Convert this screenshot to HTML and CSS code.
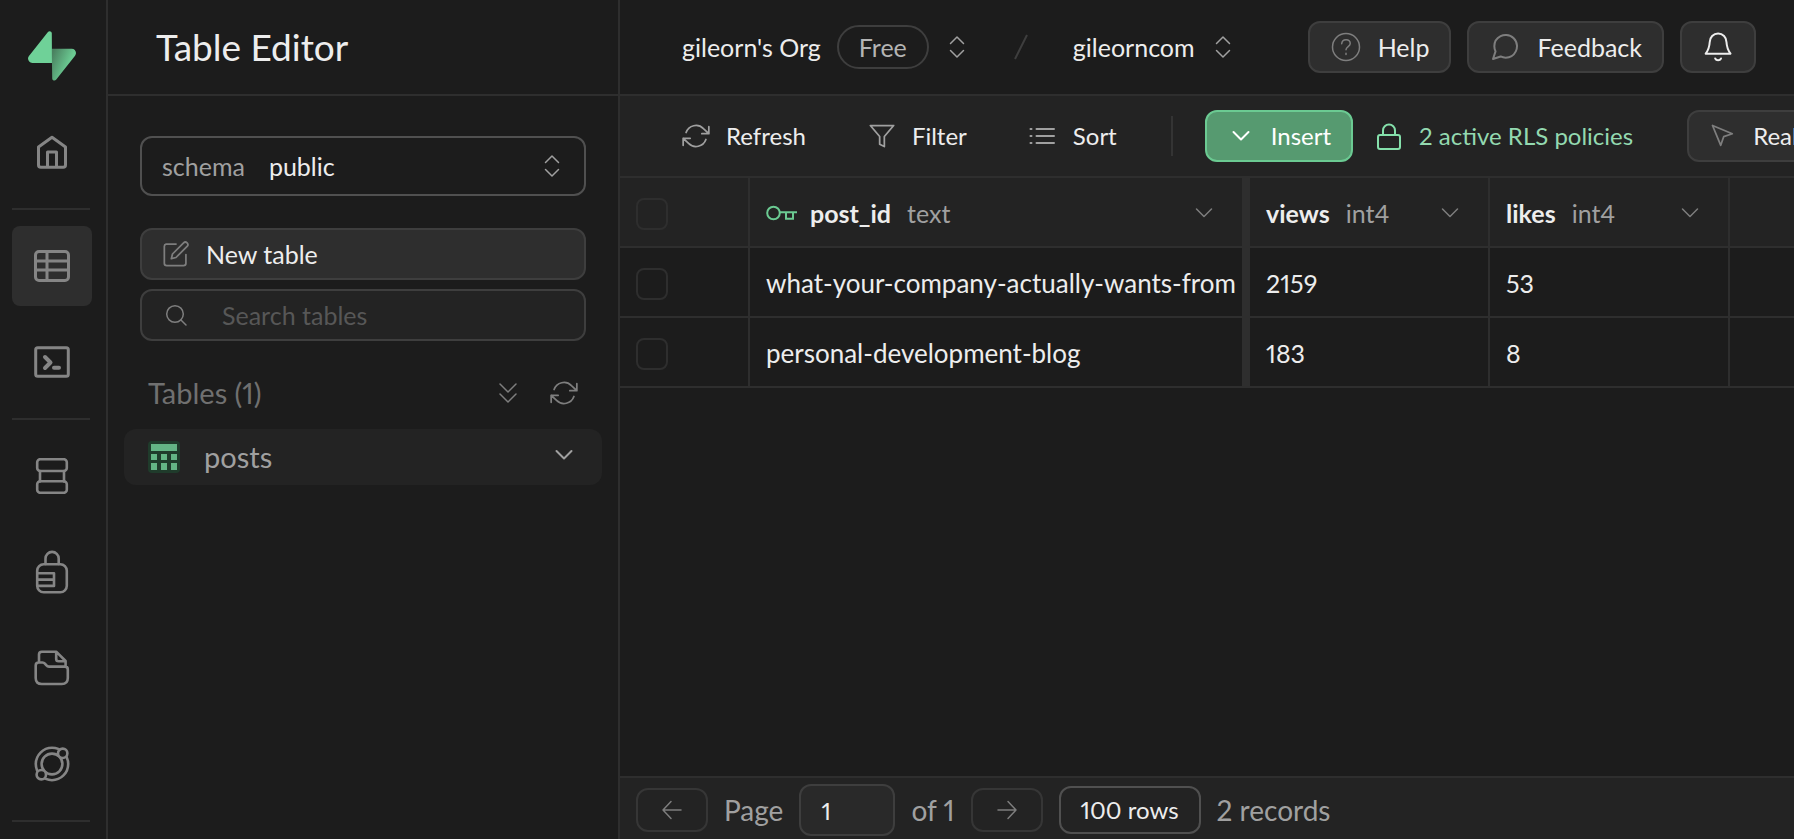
FILE: index.html
```html
<!DOCTYPE html>
<html lang="en">
<head>
<meta charset="utf-8">
<title>Table Editor</title>
<meta name="viewport" content="width=device-width, initial-scale=1">
<link rel="stylesheet" href="styles.css">
</head>
<body>
<svg class="sprite" aria-hidden="true">
  <symbol id="updown" viewBox="0 0 24 24"><path d="M5.500 8.500 12 2l6.500 6.500M5.500 15.500 12 22l6.500-6.500"/></symbol>
  <symbol id="refresh" viewBox="0 0 24 24"><path d="M23 4v6h-6M1 20v-6h6M3.510 9a9 9 0 0 1 14.850-3.360L23 10M1 14l4.640 4.360A9 9 0 0 0 20.490 15"/></symbol>
  <symbol id="chevron" viewBox="0 0 28 28"><path d="m6.500 10 7.500 7.500 7.500-7.500"/></symbol>
</svg>
<div class="app">
  <nav class="rail" aria-label="Main">
    <a class="rail-item" href="#" aria-label="Supabase">
      <svg width="48" height="50" viewBox="0 0 109 113">
        <defs><linearGradient id="shade" x1="54" y1="55" x2="94" y2="72" gradientUnits="userSpaceOnUse"><stop offset="0" stop-color="#4a8160"/><stop offset="1" stop-color="#6bca92"/></linearGradient></defs>
        <path fill="url(#shade)" d="M63.708 110.284C60.848 113.885 55.050 111.912 54.981 107.314L53.974 40.063H99.194C107.384 40.063 111.952 49.523 106.859 55.937Z"/>
        <path fill="#6fd198" d="M45.317 2.071C48.177-1.530 53.975.443 54.043 5.041L54.485 72.292H9.831C1.640 72.292-2.928 62.832 2.166 56.418Z"/>
      </svg>
    </a>
    <a class="rail-item" href="#" aria-label="Home"><svg class="icon heavy" width="36" height="36" viewBox="0 0 36 36"><path d="M4.500 13 18 3.200 31.500 13v18q0 2.300-2.300 2.300H6.800q-2.300 0-2.300-2.300ZM13.500 33V18h9v15"/></svg></a>
    <hr class="rail-line">
    <a class="rail-item active" href="#" aria-label="Table Editor" aria-current="page"><svg class="icon heavy" width="36" height="36" viewBox="0 0 36 36"><rect x="1.500" y="3.500" width="33" height="29" rx="3.500"/><path d="M2 13h32M2 22h32M13 4v28"/></svg></a>
    <a class="rail-item" href="#" aria-label="SQL Editor"><svg class="icon heavy" width="36" height="36" viewBox="0 0 36 36"><path d="M1.700 5.700q0-2 2-2h28.600q2 0 2 2v24.600q0 2-2 2H3.700q-2 0-2-2Z"/><path stroke-width="4" d="m11 13 5.500 5.500L11 24M20 23.800h5"/></svg></a>
    <hr class="rail-line">
    <a class="rail-item" href="#" aria-label="Database"><svg class="icon mid" width="36" height="36" viewBox="0 0 36 36"><rect x="3.200" y="1.200" width="29.600" height="11.800" rx="3"/><path d="M6 13v10.400M30 13v10.400"/><rect x="3.200" y="23.200" width="29.600" height="11.600" rx="3"/></svg></a>
    <a class="rail-item" href="#" aria-label="Authentication"><svg class="icon mid" width="36" height="44" viewBox="0 0 36 44"><rect x="3.200" y="14.300" width="29.600" height="28" rx="6.500"/><path d="M11.500 14V8.500a6.600 6.600 0 0 1 13.200 0V14M3.500 23.300H20v12.600H3.500M3.500 29.600H20"/></svg></a>
    <a class="rail-item" href="#" aria-label="Storage"><svg class="icon mid" width="36" height="36" viewBox="0 0 36 36"><path d="M1.700 15.500q0-3 3-3h3.800q1.400 0 2.400 1.200l1.300 1.500q1.200 1.400 2.800 1.400h16q2.800 0 2.800 2.800v8.600q0 6-6 6H7.700q-6 0-6-6ZM5 12.500V4.500q0-2.800 2.800-2.800h14.400L31.600 11v5.600M22.200 1.700V9q0 2.300 2.300 2.300h7"/></svg></a>
    <a class="rail-item" href="#" aria-label="Realtime"><svg class="icon mid" width="36" height="36" viewBox="0 0 36 36"><circle cx="18" cy="18" r="16.200"/><circle cx="18" cy="18" r="10.400"/><g fill="#1c1c1c"><circle cx="28.700" cy="7.300" r="4.700"/><circle cx="7.300" cy="28.700" r="4.700"/></g></svg></a>
    <hr class="rail-line">
  </nav>

  <aside class="side">
    <header class="side-head"><h1>Table Editor</h1></header>
    <div class="side-tools">
      <div class="schema">
        <label for="schema">schema</label>
        <select id="schema"><option>public</option></select>
        <svg class="icon" width="24" height="24"><use href="#updown"/></svg>
      </div>
      <button class="btn new-table" type="button"><svg class="icon dim" width="28" height="28" viewBox="0 0 24 24"><path d="M12 3.500H3.500a2 2 0 0 0-1.500 2V20a2 2 0 0 0 2 2h14.500a2 2 0 0 0 2-2v-7.500M18.500 2.500a2.120 2.120 0 0 1 3 3L12 15l-4 1 1-4 9.500-9.500Z"/></svg>New table</button>
      <label class="search"><svg class="icon dim" width="24" height="24" viewBox="0 0 24 24"><circle cx="11" cy="11" r="8.300"/><path d="m17 17 5 5"/></svg><input type="text" placeholder="Search tables" aria-label="Search tables"></label>
    </div>
    <div class="list-head">
      <h2>Tables (1)</h2>
      <button class="plain" type="button" aria-label="Sort tables"><svg class="icon dim" width="28" height="28" viewBox="0 0 28 28"><path d="m6 5 8 8 8-8M6 15l8 8 8-8"/></svg></button>
      <button class="plain" type="button" aria-label="Refresh tables"><svg class="icon dim" width="28" height="28"><use href="#refresh"/></svg></button>
    </div>
    <a class="table-link" href="#">
      <svg width="32" height="32" viewBox="0 0 32 32"><rect width="32" height="32" rx="4" fill="#1f3b2b"/><path fill="#63b585" d="M3 3h26v7H3zM3 13h6v6H3zM13 13h6v6h-6zM23 13h6v6h-6zM3 22h6v7H3zM13 22h6v7h-6zM23 22h6v7h-6z"/></svg>
      <span>posts</span>
      <svg class="icon table-chevron" width="28" height="28"><use href="#chevron"/></svg>
    </a>
  </aside>

  <main class="main">
    <header class="top">
      <button class="plain crumb" type="button">gileorn's Org <span class="pill">Free</span><svg class="icon" width="24" height="24"><use href="#updown"/></svg></button>
      <svg class="slash" width="32" height="32" viewBox="0 0 32 32"><path d="M22 4 10 28"/></svg>
      <button class="plain crumb" type="button">gileorncom <svg class="icon" width="24" height="24"><use href="#updown"/></svg></button>
      <div class="top-actions">
        <button class="btn" type="button"><svg class="icon dim" width="32" height="32" viewBox="0 0 32 32"><circle cx="16" cy="16" r="13.500"/><path d="M11.700 12.800c.4-5.700 9-5.200 8.500 0-.2 2.700-4.200 3-4.200 6M16 22.300v1.200"/></svg>Help</button>
        <button class="btn" type="button"><svg class="icon dim" width="32" height="32" viewBox="0 0 24 24"><path d="M21 11.500a8.380 8.380 0 0 1-.9 3.800 8.500 8.500 0 0 1-7.600 4.700 8.380 8.380 0 0 1-3.800-.9L3 21l1.900-5.700a8.380 8.380 0 0 1-.9-3.800 8.500 8.500 0 0 1 4.700-7.600 8.380 8.380 0 0 1 3.800-.9h.5a8.480 8.480 0 0 1 8 8Z"/></svg>Feedback</button>
        <button class="btn" type="button" aria-label="Notifications"><svg class="icon bell" width="32" height="32" viewBox="0 0 32 32"><path d="M3.700 22.700C6.700 18.500 7.500 15 7.700 11.200a8.400 8.700 0 0 1 16.800 0c.2 3.800 1 7.300 4 11.500ZM13.200 27.500a3.200 3.200 0 0 0 5.800 0"/></svg></button>
      </div>
    </header>

    <div class="toolbar">
      <div class="query-tools">
        <button class="btn ghost" type="button"><svg class="icon" width="28" height="28"><use href="#refresh"/></svg>Refresh</button>
        <button class="btn ghost" type="button"><svg class="icon" width="28" height="28" viewBox="0 0 24 24"><path d="M22 3H2l8 9.460V19l4 2v-8.540Z"/></svg>Filter</button>
        <button class="btn ghost" type="button"><svg class="icon" width="28" height="28" viewBox="0 0 28 28"><path stroke-width="2" d="M7.500 7H25M7.500 14H25M7.500 21H25M1.500 7h1M1.500 14h1M1.500 21h1"/></svg>Sort</button>
      </div>
      <span class="divider"></span>
      <button class="btn insert" type="button"><svg class="icon" width="28" height="28"><use href="#chevron"/></svg>Insert</button>
      <a class="btn ghost policies" href="#"><svg class="icon" width="28" height="28" viewBox="0 0 28 28"><rect x="3" y="13" width="22" height="14" rx="2"/><path d="M8 13V8.500a6 6 0 0 1 12 0V13"/></svg>2 active RLS policies</a>
      <button class="btn realtime" type="button"><svg class="icon dim" width="28" height="28" viewBox="0 0 24 24"><path d="m3 3 7.070 16.970 2.510-7.390 7.390-2.510Z"/></svg>Realtime off</button>
    </div>

    <div class="grid">
      <table>
        <colgroup><col class="c-check"><col class="c-key"><col class="c-int"><col class="c-int"><col></colgroup>
        <thead>
          <tr>
            <th class="check"><input type="checkbox" aria-label="Select all rows"></th>
            <th class="frozen"><div class="col-head"><svg class="key" width="32" height="18" viewBox="0 0 32 18"><circle cx="7.500" cy="9" r="6.300"/><path d="M14 8.300h17M20 8.300v6.400h7V8.300"/></svg><b>post_id</b><span>text</span><svg class="icon dim" width="28" height="28"><use href="#chevron"/></svg></div></th>
            <th><div class="col-head"><b>views</b><span>int4</span><svg class="icon dim" width="28" height="28"><use href="#chevron"/></svg></div></th>
            <th><div class="col-head"><b>likes</b><span>int4</span><svg class="icon dim" width="28" height="28"><use href="#chevron"/></svg></div></th>
            <th></th>
          </tr>
        </thead>
        <tbody>
          <tr><td class="check"><input type="checkbox" aria-label="Select row 1"></td><td class="frozen">what-your-company-actually-wants-from</td><td>2159</td><td>53</td><td></td></tr>
          <tr><td class="check"><input type="checkbox" aria-label="Select row 2"></td><td class="frozen">personal-development-blog</td><td>183</td><td>8</td><td></td></tr>
        </tbody>
      </table>
    </div>

    <footer class="pager">
      <button class="page-btn" type="button" aria-label="Previous page"><svg class="icon dim" width="28" height="28" viewBox="0 0 28 28"><path d="M23 14H5M13 5.500 5 14l8 8.500"/></svg></button>
      <label for="page">Page</label>
      <input id="page" type="text" value="1">
      <span>of 1</span>
      <button class="page-btn" type="button" aria-label="Next page"><svg class="icon dim" width="28" height="28" viewBox="0 0 28 28"><path d="M5 14h18M15 5.500l8 8.500-8 8.500"/></svg></button>
      <button class="rows" type="button">100 rows</button>
      <span>2 records</span>
    </footer>
  </main>
</div>
</body>
</html>
```
FILE: styles.css
```css
:root {
  --bg: #1c1c1c;
  --surface: #232323;
  --line: #2e2e2e;
  --control: #3e3e3e;
  --strong: #505050;
  --text: #ededed;
  --light: #a0a0a0;
  --dim: #7e7e7e;
}

* { box-sizing: border-box; }

body {
  margin: 0;
  background: var(--bg);
  color: var(--text);
  font: 25px/32px Lato, "Open Sans", sans-serif;
  font-variant-numeric: proportional-nums;
  overflow: hidden;
}

button, input, select { font: inherit; color: inherit; font-variant-numeric: inherit; }
button { cursor: pointer; }
a { color: inherit; text-decoration: none; }
h1, h2 { margin: 0; font-weight: 400; }
svg { display: block; flex: none; }

.sprite { position: absolute; width: 0; height: 0; }

.icon {
  fill: none;
  stroke: var(--light);
  stroke-width: 1.5px;
  stroke-linecap: round;
  stroke-linejoin: round;
}
.icon.dim { stroke: var(--dim); }
.icon.heavy { stroke: #858585; stroke-width: 3px; }
.icon.mid { stroke: #858585; stroke-width: 2.6px; }

.app { display: flex; height: 100vh; }

/* Icon rail */
.rail {
  flex: none;
  display: flex;
  flex-direction: column;
  gap: 16px;
  width: 108px;
  padding: 16px 12px 0;
  border-right: 2px solid var(--line);
  overflow: hidden;
}
.rail-item {
  flex: none;
  display: grid;
  place-items: center;
  width: 80px;
  height: 80px;
  border-radius: 8px;
}
.rail-item.active { background: var(--line); }
.rail-line {
  flex: none;
  width: 78px;
  height: 2px;
  margin: 0;
  border: 0;
  background: var(--line);
}

/* Table list */
.side {
  flex: none;
  width: 512px;
  border-right: 2px solid var(--line);
}
.side-head {
  display: flex;
  align-items: center;
  height: 96px;
  padding-left: 48px;
  border-bottom: 2px solid var(--line);
}
.side-head h1 { font-size: 37px; line-height: 48px; }

.side-tools {
  display: flex;
  flex-direction: column;
  gap: 9px;
  padding: 40px 32px 0;
}
.schema {
  display: flex;
  align-items: center;
  height: 60px;
  margin-bottom: 23px;
  padding: 0 20px;
  border: 2px solid var(--strong);
  border-radius: 12px;
}
.schema label { color: var(--light); }
.schema select {
  flex: 1;
  height: 56px;
  padding: 0 24px;
  border: 0;
  background: transparent;
  appearance: none;
  outline: 0;
}

.btn {
  flex: none;
  display: flex;
  align-items: center;
  gap: 16px;
  height: 52px;
  padding: 0 20px;
  border: 2px solid var(--control);
  border-radius: 12px;
  background: var(--line);
  white-space: nowrap;
}
.btn.ghost { border-color: transparent; background: transparent; }

.search {
  display: flex;
  align-items: center;
  gap: 34px;
  height: 52px;
  padding: 0 22px;
  border: 2px solid var(--control);
  border-radius: 12px;
  background: var(--surface);
}
.search input {
  flex: 1;
  min-width: 0;
  padding: 0;
  border: 0;
  background: transparent;
  outline: 0;
}
.search input::placeholder { color: #575757; opacity: 1; }

.plain {
  display: flex;
  align-items: center;
  padding: 0;
  border: 0;
  background: transparent;
}

.list-head {
  display: flex;
  align-items: center;
  gap: 28px;
  padding: 36px 40px 20px;
}
.list-head h2 {
  flex: 1;
  color: #707070;
  font-size: 29px;
}

.table-link {
  display: flex;
  align-items: center;
  gap: 24px;
  height: 56px;
  margin: 0 16px;
  padding: 0 24px;
  border-radius: 12px;
  background: var(--surface);
  color: var(--light);
  font-size: 29px;
}
.table-link span { flex: 1; }
.table-chevron { align-self: flex-start; margin-top: 12px; stroke-width: 2px; }

/* Main column */
.main {
  flex: 1;
  display: flex;
  flex-direction: column;
  min-width: 0;
}
.top {
  flex: none;
  display: flex;
  align-items: center;
  gap: 36px;
  height: 96px;
  padding: 0 38px 0 62px;
  border-bottom: 2px solid var(--line);
}
.crumb { gap: 16px; }
.pill {
  padding: 4px 20px;
  border: 2px solid var(--control);
  border-radius: 24px;
  color: #b4b4b4;
}
.slash { fill: none; stroke: var(--control); stroke-width: 2px; }
.top-actions { display: flex; gap: 16px; margin-left: auto; }
.bell { stroke: var(--text); stroke-width: 2px; }

.toolbar {
  flex: none;
  display: flex;
  align-items: center;
  height: 82px;
  padding-left: 40px;
  border-bottom: 2px solid var(--line);
  background: var(--surface);
  font-size: 24px;
  overflow: hidden;
}
.query-tools { flex: none; display: flex; gap: 18px; }
.divider {
  flex: none;
  width: 2px;
  height: 40px;
  margin: 0 32px;
  background: #343434;
}
.btn.insert { border-color: #6bca92; background: #569a70; color: #fff; }
.insert .icon { stroke: #fff; stroke-width: 2px; }
.policies { color: #93d9b0; }
.policies .icon { stroke: #85e0ab; stroke-width: 2px; }
.realtime { margin-left: 32px; }

/* Data grid */
.grid { flex: 1; min-height: 0; overflow: hidden; }
table {
  width: 100%;
  table-layout: fixed;
  border-spacing: 0;
}
.c-check { width: 130px; }
.c-key { width: 500px; }
.c-int { width: 240px; }
th, td {
  height: 70px;
  padding: 2px 0 0 16px;
  border-right: 2px solid var(--line);
  border-bottom: 2px solid var(--line);
  font-weight: 400;
  text-align: left;
  white-space: nowrap;
  overflow: hidden;
}
th { background: var(--surface); }
.check { padding-top: 4px; }
.frozen { border-right-width: 8px; }
td.frozen { font-size: 26px; }
th:last-child, td:last-child { border-right: 0; }

.col-head {
  display: flex;
  align-items: center;
  gap: 16px;
  padding-right: 24px;
}
.col-head span { flex: 1; color: var(--light); }
.key { margin-right: -4px; fill: none; stroke: #6bca92; stroke-width: 2px; }

input[type="checkbox"] {
  display: block;
  width: 32px;
  height: 32px;
  margin: 0;
  border: 2px solid var(--line);
  border-radius: 8px;
  appearance: none;
}

/* Pager */
.pager {
  flex: none;
  display: flex;
  align-items: center;
  gap: 16px;
  padding: 6px 16px 3px;
  border-top: 2px solid var(--line);
  background: var(--surface);
  color: var(--light);
  font-size: 28px;
}
.page-btn {
  display: grid;
  place-items: center;
  width: 72px;
  height: 44px;
  border: 2px solid #363636;
  border-radius: 12px;
  background: transparent;
}
.pager input {
  width: 96px;
  height: 52px;
  padding: 0 20px;
  border: 2px solid var(--control);
  border-radius: 12px;
  background: #292929;
  color: var(--text);
  font-size: 24px;
}
.rows {
  height: 48px;
  padding: 0 20px;
  border: 2px solid var(--strong);
  border-radius: 12px;
  background: transparent;
  color: var(--text);
  font-size: 24px;
}
```
